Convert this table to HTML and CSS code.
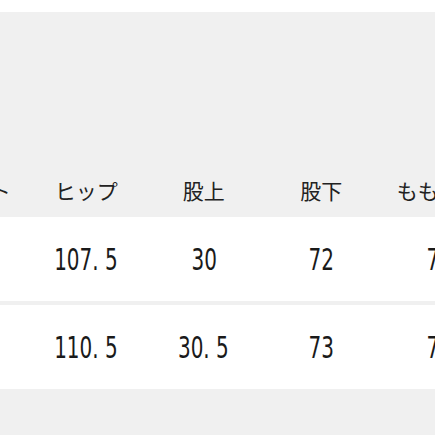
FILE: index.html
```html
<!DOCTYPE html>
<html lang="ja">
<head>
<meta charset="utf-8">
<link rel="stylesheet" href="styles.css">
</head>
<body>
<div class="sheet">
  <div class="table">
    <div class="row head">
      <div class="cell">ウエスト</div>
      <div class="cell">ヒップ</div>
      <div class="cell">股上</div>
      <div class="cell">股下</div>
      <div class="cell">もも周り</div>
    </div>
    <div class="row body">
      <div class="cell num"><span>84</span></div>
      <div class="cell num"><span>107. 5</span></div>
      <div class="cell num"><span>30</span></div>
      <div class="cell num"><span>72</span></div>
      <div class="cell num"><span>70</span></div>
    </div>
    <div class="row body">
      <div class="cell num"><span>88</span></div>
      <div class="cell num"><span>110. 5</span></div>
      <div class="cell num"><span>30. 5</span></div>
      <div class="cell num"><span>73</span></div>
      <div class="cell num"><span>72</span></div>
    </div>
  </div>
</div>
</body>
</html>
```

FILE: styles.css
```css
html, body {
  margin: 0;
  padding: 0;
  background: #ffffff;
  overflow: hidden;
}
.sheet {
  margin-top: 12px;
  height: 423px;
  background: #f0f0f0;
  padding-top: 150px;
  box-sizing: border-box;
  overflow: hidden;
}
.table {
  display: flex;
  flex-direction: column;
  gap: 4px;
  margin-left: -90px;
  width: 620px;
}
.row {
  display: flex;
}
.row.head {
  height: 55px;
  align-items: center;
  margin-bottom: -4px;
}
.row.body {
  height: 84px;
  background: #ffffff;
  align-items: center;
}
.cell {
  width: 117.5px;
  flex: none;
  text-align: center;
  font-family: "Noto Sans CJK JP", "Noto Sans", sans-serif;
  font-size: 21px;
  color: #222222;
  white-space: nowrap;
}
.cell.num {
  font-family: "DejaVu Sans Condensed", "DejaVu Sans", sans-serif;
  font-size: 30px;
  color: #1a1a1a;
}
.cell.num span {
  display: inline-block;
  transform: scaleX(0.74);
}
```
